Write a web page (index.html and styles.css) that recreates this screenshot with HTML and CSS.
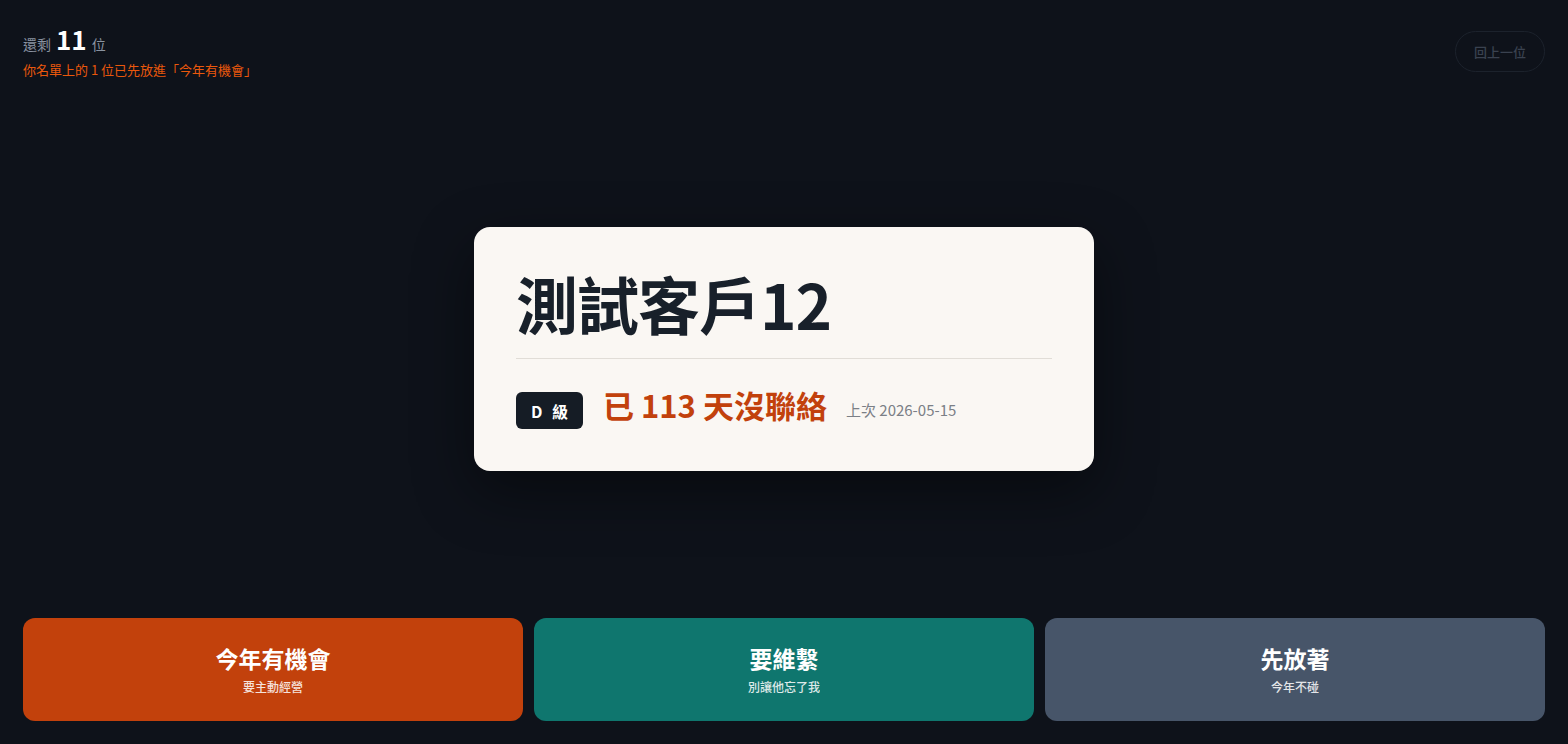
FILE: index.html
```html
<!DOCTYPE html>
<html lang="zh-Hant">
<head>
<meta charset="utf-8">
<link rel="stylesheet" href="styles.css">
</head>
<body>
<div class="page">
  <header class="top">
    <div class="status">
      <div class="remain"><span class="lbl">還剩</span><span class="num">11</span><span class="lbl">位</span></div>
      <div class="note">你名單上的 1 位已先放進「今年有機會」</div>
    </div>
    <button class="back">回上一位</button>
  </header>
  <main class="stage">
    <section class="card">
      <h1 class="name">測試客戶12</h1>
      <div class="divider"></div>
      <div class="meta">
        <span class="badge">D 級</span>
        <span class="days">已 113 天沒聯絡</span>
        <span class="last">上次 2026-05-15</span>
      </div>
    </section>
  </main>
  <footer class="actions">
    <button class="act act-orange"><span class="act-title">今年有機會</span><span class="act-sub">要主動經營</span></button>
    <button class="act act-teal"><span class="act-title">要維繫</span><span class="act-sub">別讓他忘了我</span></button>
    <button class="act act-slate"><span class="act-title">先放著</span><span class="act-sub">今年不碰</span></button>
  </footer>
</div>
</body>
</html>
```
FILE: styles.css
```css
* { box-sizing: border-box; }
html, body { margin: 0; padding: 0; }
body {
  background: #0e121a;
  font-family: "Noto Sans CJK TC", "Noto Sans", sans-serif;
  color: #fff;
}
.page {
  height: 744px;
  display: flex;
  flex-direction: column;
}
.top {
  display: flex;
  justify-content: space-between;
  align-items: flex-start;
  padding: 26px 23px 0 23px;
}
.remain {
  display: flex;
  align-items: baseline;
  gap: 5px;
  line-height: 1;
}
.lbl { font-size: 14px; color: #8a93a1; }
.num { font-size: 26px; font-weight: 700; color: #fff; }
.note {
  margin-top: 10px;
  font-size: 13px;
  color: #ea580c;
  line-height: 1.3;
}
.back {
  margin-top: 5px;
  width: 90px;
  height: 41px;
  border-radius: 21px;
  border: 1px solid #1c222c;
  background: transparent;
  color: #3a4250;
  font-family: inherit;
  font-size: 13px;
  font-weight: 500;
}
.stage {
  flex: 1;
  display: flex;
  align-items: center;
  justify-content: center;
  padding-top: 1px;
}
.card {
  width: 620px;
  height: 244px;
  background: #faf7f3;
  border-radius: 16px;
  padding: 39px 42px 0 42px;
  box-shadow: 0 20px 60px rgba(0,0,0,0.45);
}
.name {
  margin: 0;
  font-size: 62px;
  font-weight: 700;
  color: #18202a;
  line-height: 1.2;
  letter-spacing: -1px;
}
.divider {
  margin-top: 18px;
  height: 1px;
  background: #e1ddd7;
}
.meta {
  margin-top: 33px;
  display: flex;
  align-items: flex-start;
}
.badge {
  display: inline-flex;
  align-items: center;
  justify-content: center;
  width: 67px;
  height: 37px;
  border-radius: 6px;
  background: #151c25;
  color: #fff;
  font-size: 16px;
  font-weight: 700;
  letter-spacing: 3px;
  padding-left: 3px;
}
.days {
  margin-left: 20px;
  margin-top: -6px;
  font-size: 31px;
  font-weight: 700;
  color: #c2410c;
  line-height: 1.2;
}
.last {
  margin-left: 19px;
  margin-top: 7px;
  font-size: 15px;
  color: #7b7f86;
  line-height: 1.5;
}
.actions {
  display: flex;
  gap: 11px;
  padding: 0 23px 23px 23px;
}
.act {
  flex: 1;
  height: 103px;
  border: none;
  border-radius: 12px;
  display: flex;
  flex-direction: column;
  align-items: center;
  justify-content: center;
  font-family: inherit;
  color: #fff;
  gap: 6px;
}
.act-title { font-size: 23px; font-weight: 700; line-height: 1.2; }
.act-sub { font-size: 12px; font-weight: 500; opacity: 0.85; line-height: 1.3; }
.act-orange { background: #c2410c; }
.act-teal { background: #0f766e; }
.act-slate { background: #475569; }
```
